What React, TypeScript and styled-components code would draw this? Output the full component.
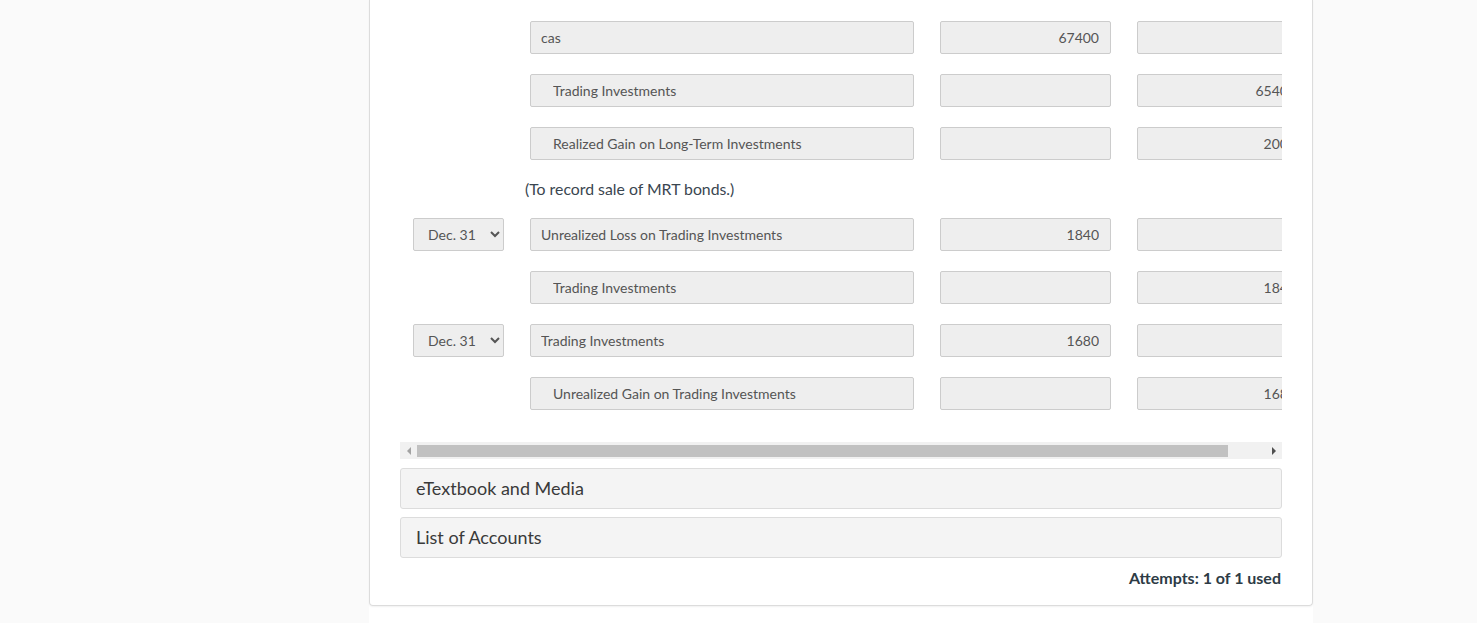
import styled, { createGlobalStyle } from 'styled-components';

const GlobalStyle = createGlobalStyle`
  html, body {
    margin: 0;
    padding: 0;
    background: #fafafa;
    font-family: Lato, 'Open Sans', Arial, sans-serif;
  }
`;

interface IEntry {
  date?: string;
  account: string;
  debit?: string;
  credit?: string;
  indent?: boolean;
}

type IRow = IEntry | { note: string };

const rows: IRow[] = [
  { account: 'cas', debit: '67400' },
  { account: 'Trading Investments', credit: '65400', indent: true },
  { account: 'Realized Gain on Long-Term Investments', credit: '2000', indent: true },
  { note: '(To record sale of MRT bonds.)' },
  { date: 'Dec. 31', account: 'Unrealized Loss on Trading Investments', debit: '1840' },
  { account: 'Trading Investments', credit: '1840', indent: true },
  { date: 'Dec. 31', account: 'Trading Investments', debit: '1680' },
  { account: 'Unrealized Gain on Trading Investments', credit: '1680', indent: true },
];

const App = () => {
  return (
    <>
      <GlobalStyle />
      <StyledColumn>
        <StyledCard>
          <StyledScrollArea>
            <StyledJournal>
              {rows.map((row, i) =>
                'note' in row ? (
                  <StyledNote key={i}>{row.note}</StyledNote>
                ) : (
                  <StyledRow key={i}>
                    <StyledDateCell>
                      {row.date && (
                        <StyledSelect defaultValue={row.date}>
                          <option>{row.date}</option>
                        </StyledSelect>
                      )}
                    </StyledDateCell>
                    <StyledInput readOnly value={row.account} $indent={row.indent} />
                    <StyledInput readOnly value={row.debit ?? ''} $align='right' />
                    <StyledInput readOnly value={row.credit ?? ''} $align='right' />
                  </StyledRow>
                )
              )}
            </StyledJournal>
          </StyledScrollArea>
          <StyledScrollbar>
            <StyledArrow $dir='left' $disabled />
            <StyledTrack>
              <StyledThumb />
            </StyledTrack>
            <StyledArrow $dir='right' />
          </StyledScrollbar>
          <StyledAccordion>eTextbook and Media</StyledAccordion>
          <StyledAccordion>List of Accounts</StyledAccordion>
          <StyledAttempts>Attempts: 1 of 1 used</StyledAttempts>
        </StyledCard>
      </StyledColumn>
    </>
  );
};

const StyledColumn = styled.div`
  width: 944px;
  min-height: 623px;
  margin-left: 369px;
  background: #fff;
`;

const StyledCard = styled.div`
  box-sizing: border-box;
  display: flex;
  flex-direction: column;
  padding: 21px 30px 0 30px;
  height: 606px;
  border: 1px solid #dcdcdc;
  border-top: none;
  border-radius: 0 0 4px 4px;
  box-shadow: 0 1px 2px rgba(0, 0, 0, 0.06);
`;

const StyledScrollArea = styled.div`
  width: 100%;
  overflow: hidden;
`;

const StyledJournal = styled.div`
  width: 918px;
  display: flex;
  flex-direction: column;
  gap: 20px;
  padding-bottom: 32px;
`;

const StyledRow = styled.div`
  display: grid;
  grid-template-columns: 104px 384px 171px 171px;
  column-gap: 26px;
`;

const StyledDateCell = styled.div`
  display: flex;
  padding-left: 13px;
`;

const StyledSelect = styled.select`
  box-sizing: border-box;
  width: 91px;
  height: 33px;
  padding: 0 8px 0 10px;
  border: 1px solid #ccc;
  border-radius: 2px;
  background: #eee;
  color: #555;
  font-family: Lato, Arial, sans-serif;
  font-size: 14px;
`;

const StyledInput = styled.input<{ $indent?: boolean; $align?: 'left' | 'right' }>`
  box-sizing: border-box;
  width: 100%;
  height: 33px;
  margin: 0;
  padding: 0 ${({ $align }) => ($align === 'right' ? '11px' : '10px')} 0
    ${({ $indent }) => ($indent ? '22px' : '10px')};
  border: 1px solid #ccc;
  border-radius: 2px;
  background: #eee;
  color: #555;
  font-family: Lato, Arial, sans-serif;
  font-size: 14px;
  text-align: ${({ $align }) => $align ?? 'left'};
  outline: none;
`;

const StyledNote = styled.div`
  margin-left: 125px;
  height: 18px;
  line-height: 18px;
  font-size: 15.8px;
  color: #3a4650;
`;

const StyledScrollbar = styled.div`
  display: flex;
  height: 17px;
  background: #f1f1f1;
`;

const StyledTrack = styled.div`
  flex: 1;
  display: flex;
  align-items: center;
`;

const StyledThumb = styled.div`
  width: 811px;
  height: 12px;
  background: #c1c1c1;
`;

const StyledArrow = styled.div<{ $dir: 'left' | 'right'; $disabled?: boolean }>`
  width: 17px;
  display: flex;
  align-items: center;
  justify-content: center;

  &::after {
    content: '';
    width: 0;
    height: 0;
    border-top: 4px solid transparent;
    border-bottom: 4px solid transparent;
    ${({ $dir, $disabled }) =>
      $dir === 'left'
        ? `border-right: 4px solid ${$disabled ? '#a3a3a3' : '#505050'};`
        : `border-left: 4px solid ${$disabled ? '#a3a3a3' : '#505050'};`}
  }
`;

const StyledAccordion = styled.div`
  box-sizing: border-box;
  margin-top: 9px;
  height: 41px;
  padding: 0 0 2px 15px;
  display: flex;
  align-items: center;
  background: #f4f4f4;
  border: 1px solid #dcdcdc;
  border-radius: 3px;
  font-size: 18px;
  color: #3a3a3a;

  & + & {
    margin-top: 8px;
  }
`;

const StyledAttempts = styled.div`
  margin-top: 10px;
  padding-right: 1px;
  text-align: right;
  font-size: 16px;
  font-weight: 700;
  color: #2d3b45;
  line-height: 20px;
`;

export default App;
